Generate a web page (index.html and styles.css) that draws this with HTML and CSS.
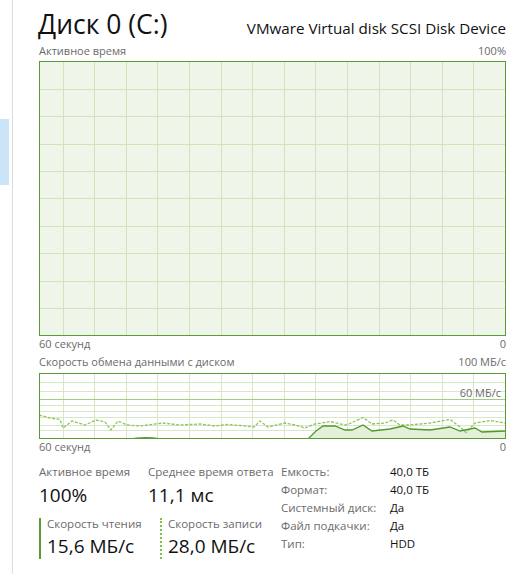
FILE: index.html
```html
<!DOCTYPE html>
<html lang="ru">
<head>
<meta charset="utf-8">
<title>Диск 0 (C:)</title>
<link rel="stylesheet" href="styles.css">
</head>
<body>
<div class="app">
  <aside class="side"><div class="sel"></div></aside>
  <main class="main">
    <header class="head">
      <h1 class="title">Диск 0 (C:)</h1>
      <div class="device">VMware Virtual disk SCSI Disk Device</div>
    </header>

    <div class="axis top1"><span>Активное время</span><span>100%</span></div>
    <svg class="chart chart1" width="467" height="275" viewBox="0 0 467 275">
      <rect x="0" y="0" width="467" height="275" fill="#eff6e9"/>
      <g stroke="#cfe3bd" stroke-width="1" shape-rendering="crispEdges">
        <line x1="24.5" y1="0" x2="24.5" y2="275"/>
        <line x1="55.5" y1="0" x2="55.5" y2="275"/>
        <line x1="87.5" y1="0" x2="87.5" y2="275"/>
        <line x1="118.5" y1="0" x2="118.5" y2="275"/>
        <line x1="150.5" y1="0" x2="150.5" y2="275"/>
        <line x1="182.5" y1="0" x2="182.5" y2="275"/>
        <line x1="213.5" y1="0" x2="213.5" y2="275"/>
        <line x1="245.5" y1="0" x2="245.5" y2="275"/>
        <line x1="276.5" y1="0" x2="276.5" y2="275"/>
        <line x1="308.5" y1="0" x2="308.5" y2="275"/>
        <line x1="340.5" y1="0" x2="340.5" y2="275"/>
        <line x1="371.5" y1="0" x2="371.5" y2="275"/>
        <line x1="403.5" y1="0" x2="403.5" y2="275"/>
        <line x1="434.5" y1="0" x2="434.5" y2="275"/>
        <line x1="0" y1="28.5" x2="467" y2="28.5"/>
        <line x1="0" y1="55.5" x2="467" y2="55.5"/>
        <line x1="0" y1="83.5" x2="467" y2="83.5"/>
        <line x1="0" y1="110.5" x2="467" y2="110.5"/>
        <line x1="0" y1="137.5" x2="467" y2="137.5"/>
        <line x1="0" y1="165.5" x2="467" y2="165.5"/>
        <line x1="0" y1="192.5" x2="467" y2="192.5"/>
        <line x1="0" y1="220.5" x2="467" y2="220.5"/>
        <line x1="0" y1="247.5" x2="467" y2="247.5"/>
      </g>
      <rect x="0.5" y="0.5" width="466" height="274" fill="none" stroke="#5b9b35" stroke-width="1" shape-rendering="crispEdges"/>
    </svg>
    <div class="axis"><span>60 секунд</span><span>0</span></div>

    <div class="axis top2"><span>Скорость обмена данными с диском</span><span>100 МБ/с</span></div>
    <div class="chart2-wrap">
      <svg class="chart chart2" width="467" height="66" viewBox="0 0 467 66">
        <rect x="0" y="0" width="467" height="66" fill="#ffffff"/>
        <g stroke="#d6e8c7" stroke-width="1" shape-rendering="crispEdges">
          <line x1="24.5" y1="0" x2="24.5" y2="66"/>
          <line x1="55.5" y1="0" x2="55.5" y2="66"/>
          <line x1="87.5" y1="0" x2="87.5" y2="66"/>
          <line x1="118.5" y1="0" x2="118.5" y2="66"/>
          <line x1="150.5" y1="0" x2="150.5" y2="66"/>
          <line x1="182.5" y1="0" x2="182.5" y2="66"/>
          <line x1="213.5" y1="0" x2="213.5" y2="66"/>
          <line x1="245.5" y1="0" x2="245.5" y2="66"/>
          <line x1="276.5" y1="0" x2="276.5" y2="66"/>
          <line x1="308.5" y1="0" x2="308.5" y2="66"/>
          <line x1="340.5" y1="0" x2="340.5" y2="66"/>
          <line x1="371.5" y1="0" x2="371.5" y2="66"/>
          <line x1="403.5" y1="0" x2="403.5" y2="66"/>
          <line x1="434.5" y1="0" x2="434.5" y2="66"/>
          <line x1="0" y1="9.5" x2="467" y2="9.5"/>
          <line x1="0" y1="18.5" x2="467" y2="18.5"/>
          <line x1="0" y1="32.5" x2="467" y2="32.5"/>
          <line x1="0" y1="38.5" x2="467" y2="38.5"/>
          <line x1="0" y1="44.5" x2="467" y2="44.5"/>
          <line x1="0" y1="52.5" x2="467" y2="52.5"/>
          <line x1="0" y1="57.5" x2="467" y2="57.5"/>
        </g>
        <line x1="0" y1="26.5" x2="467" y2="26.5" stroke="#9fcb82" stroke-width="1" shape-rendering="crispEdges"/>
        <path d="M269 66 L277 58 L284 53 L296 53 L306 57 L313 57 L324 52 L333 58 L351 56 L364 53 L371 56 L391 57 L411 54 L421 58 L436 55 L443 59 L466 58 L466 66 Z" fill="#e4f0d9"/>
        <path d="M88 66 Q104 62.5 120 65 L120 66 Z" fill="#4f9a2a"/>
        <polyline fill="none" stroke="#8bc55c" stroke-width="1.3" stroke-dasharray="3 1.5" points="0,42 11,45 21,46.5 24,55 33,48 46,52 57,47 66,49 72,57 79,48 88,52 101,53 124,50 141,52 161,51 176,53 188,51.5 201,52.5 215,54 221,48 229,54 246,50 256,52 266,55 276,51 291,48.5 306,52 311,50.5 324,44.5 333,51 346,50 354,47 361,52 371,52 391,50 411,46.5 421,54 427,59.5 436,50 451,47.5 466,50"/>
        <polyline fill="none" stroke="#4f9a2a" stroke-width="1.3" points="269,66 277,58 284,53 296,53 306,57 313,57 324,52 333,58 351,56 364,53 371,56 391,57 411,54 421,58 436,55 443,59 466,58"/>
        <rect x="0.5" y="0.5" width="466" height="65" fill="none" stroke="#5b9b35" stroke-width="1" shape-rendering="crispEdges"/>
      </svg>
      <span class="mark">60 МБ/с</span>
    </div>
    <div class="axis"><span>60 секунд</span><span>0</span></div>

    <section class="stats">
      <div class="live">
        <div class="pair">
          <div class="metric m1">
            <div class="label">Активное время</div>
            <div class="value">100%</div>
          </div>
          <div class="metric">
            <div class="label">Среднее время ответа</div>
            <div class="value">11,1 мс</div>
          </div>
        </div>
        <div class="pair rates">
          <div class="rate read">
            <div class="label">Скорость чтения</div>
            <div class="value">15,6 МБ/с</div>
          </div>
          <div class="rate write">
            <div class="label">Скорость записи</div>
            <div class="value">28,0 МБ/с</div>
          </div>
        </div>
      </div>
      <dl class="props">
        <dt>Емкость:</dt><dd>40,0 ТБ</dd>
        <dt>Формат:</dt><dd>40,0 ТБ</dd>
        <dt>Системный диск:</dt><dd>Да</dd>
        <dt>Файл подкачки:</dt><dd>Да</dd>
        <dt>Тип:</dt><dd>HDD</dd>
      </dl>
    </section>
  </main>
</div>
</body>
</html>
```

FILE: styles.css
```css
html, body {
  margin: 0;
  padding: 0;
  background: #ffffff;
}

body {
  font-family: "Open Sans", "Noto Sans", "Liberation Sans", sans-serif;
  color: #000;
  width: 514px;
  height: 586px;
  overflow: hidden;
}

.app {
  display: flex;
  align-items: flex-start;
}

.side {
  width: 13px;
  height: 574px;
  box-sizing: border-box;
  border-right: 1px solid #dcdcdc;
  padding-top: 119px;
}

.sel {
  width: 9px;
  height: 66px;
  background: #cce4f7;
}

.main {
  margin-left: 26px;
  width: 467px;
  display: flex;
  flex-direction: column;
}

.head {
  display: flex;
  justify-content: space-between;
  align-items: baseline;
  padding-top: 9px;
  height: 30px;
}

.title {
  margin: 0 0 0 -1px;
  font-weight: 400;
  font-size: 26.5px;
  line-height: 30px;
  color: #111;
}

.device {
  font-size: 15.2px;
  line-height: 30px;
  color: #111;
}

.axis {
  display: flex;
  justify-content: space-between;
  font-size: 11px;
  line-height: 16px;
  height: 16px;
  color: #6b6b6b;
}

.top1 {
  margin-top: 4px;
  margin-bottom: 2px;
}

.top2 {
  margin-top: 2px;
  margin-bottom: 3px;
}

.chart {
  display: block;
}

.chart2-wrap {
  position: relative;
  width: 467px;
  height: 66px;
}

.mark {
  position: absolute;
  right: 5px;
  top: 13px;
  font-size: 11px;
  line-height: 14px;
  color: #6b6b6b;
}

.stats {
  display: flex;
  padding-top: 7.5px;
}

.live {
  width: 242px;
  margin-top: 1px;
}

.pair {
  display: flex;
}

.metric.m1 {
  width: 109px;
}

.label {
  font-size: 11.5px;
  line-height: 16px;
  color: #6b6b6b;
  white-space: nowrap;
}

.value {
  font-size: 19px;
  line-height: 26px;
  margin-top: 2px;
  color: #111;
  white-space: nowrap;
}

.rates {
  margin-top: 10px;
}

.rate {
  height: 41px;
  padding-left: 6px;
}

.rate .label {
  line-height: 12px;
}

.rate .value {
  margin-top: 3px;
}

.read {
  width: 113px;
  border-left: 2px solid #5b9b35;
}

.write {
  border-left: 2px dotted #7cc24a;
}

.props {
  margin: 0;
  display: grid;
  grid-template-columns: 109px auto;
  grid-auto-rows: 18px;
  font-size: 11.5px;
  line-height: 18px;
}

.props dt {
  color: #6b6b6b;
}

.props dd {
  margin: 0;
  color: #111;
}
```
